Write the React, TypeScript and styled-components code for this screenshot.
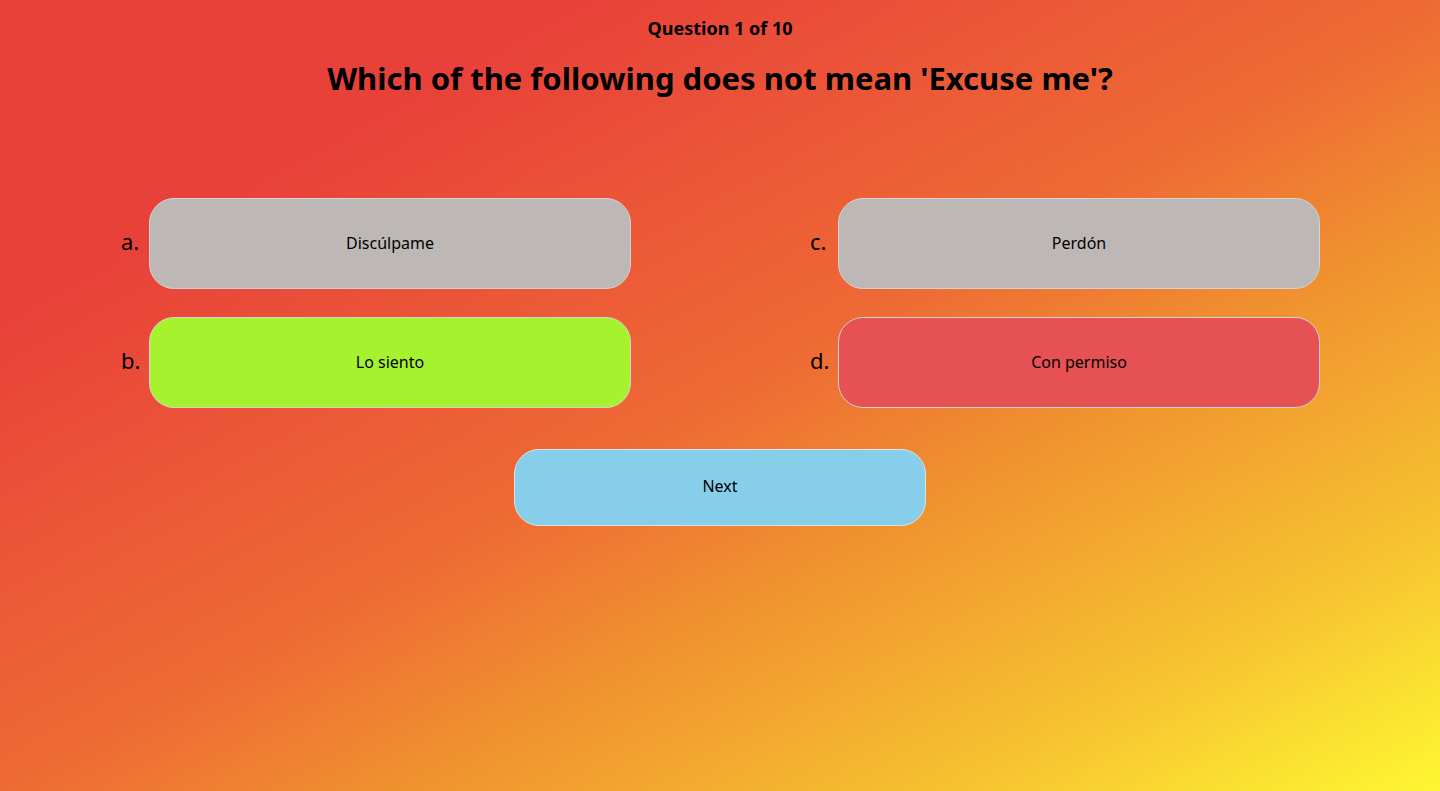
import React from "react";
import styled, { createGlobalStyle } from "styled-components";

const GlobalStyle = createGlobalStyle`
  html, body { margin: 0; padding: 0; }
  body { font-family: "Noto Sans", "Open Sans", Arial, sans-serif; color: #000; }
  * { box-sizing: border-box; }
`;

const Page = styled.div`
  min-height: 100vh;
  display: flex;
  flex-direction: column;
  align-items: stretch;
  padding-top: 16px;
  background: linear-gradient(
    to bottom right,
    #e8413a 0%,
    #e8413a 20%,
    #ee6a34 50%,
    #f0952f 65%,
    #f6bf30 82%,
    #fef732 100%
  );
`;

const Counter = styled.div`
  text-align: center;
  font-size: 18px;
  font-weight: 700;
  line-height: 24px;
  margin: 0;
`;

const Title = styled.h1`
  text-align: center;
  font-size: 31px;
  font-weight: 700;
  line-height: 40px;
  margin: 18px 0 0;
`;

const OptionsGrid = styled.div`
  display: grid;
  grid-template-columns: 689px 689px;
  row-gap: 28px;
  padding-left: 121px;
  margin-top: 100px;
`;

const OptionItem = styled.div`
  display: flex;
  align-items: center;
`;

const Letter = styled.span`
  width: 28px;
  font-size: 22px;
  line-height: 26px;
  margin-top: -6px;
`;

const AnswerButton = styled.button<{ $tone: string }>`
  width: 482px;
  height: 91px;
  padding: 0 0 2px;
  border-radius: 25px;
  border: 1px solid #d6d2d2;
  background: ${(p) => p.$tone};
  font-family: inherit;
  font-size: 16px;
  color: #000;
  cursor: pointer;
`;

const NextRow = styled.div`
  display: flex;
  justify-content: center;
  margin-top: 41px;
`;

const NextButton = styled.button`
  width: 412px;
  height: 77px;
  padding: 0 0 4px;
  border-radius: 25px;
  border: 1px solid #d8e4ea;
  background: #87ceeb;
  font-family: inherit;
  font-size: 16px;
  color: #000;
  cursor: pointer;
`;

const options = [
  { letter: "a.", text: "Discúlpame", tone: "#bdb8b6" },
  { letter: "c.", text: "Perdón", tone: "#bdb8b6" },
  { letter: "b.", text: "Lo siento", tone: "#a6f22f" },
  { letter: "d.", text: "Con permiso", tone: "#e65153" },
];

export default function App() {
  return (
    <>
      <GlobalStyle />
      <Page>
        <Counter>Question 1 of 10</Counter>
        <Title>Which of the following does not mean 'Excuse me'?</Title>
        <OptionsGrid>
          {options.map((o) => (
            <OptionItem key={o.letter}>
              <Letter>{o.letter}</Letter>
              <AnswerButton $tone={o.tone}>{o.text}</AnswerButton>
            </OptionItem>
          ))}
        </OptionsGrid>
        <NextRow>
          <NextButton>Next</NextButton>
        </NextRow>
      </Page>
    </>
  );
}
